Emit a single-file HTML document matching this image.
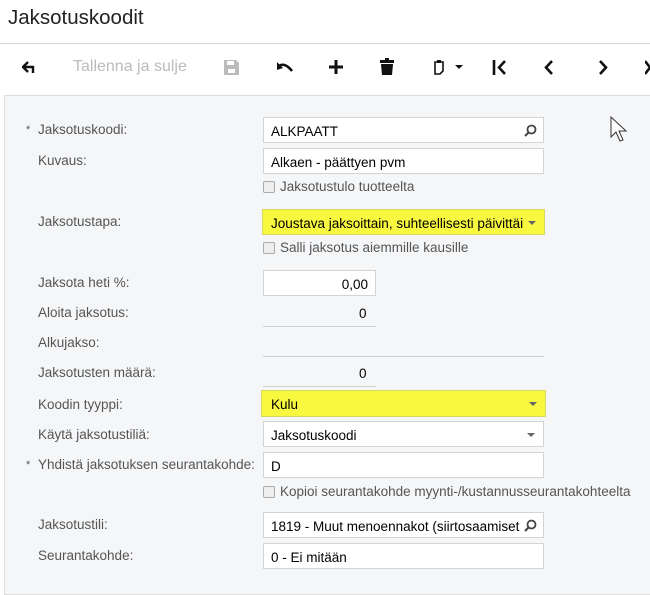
<!DOCTYPE html>
<html><head><meta charset="utf-8"><style>
*{box-sizing:border-box;margin:0;padding:0}
body{width:650px;height:581px;overflow:hidden;background:#fff;font-family:"Liberation Sans",sans-serif;position:relative}
.t{position:absolute;left:8px;top:6px;font-size:20.5px;color:#222}
.hl{position:absolute;left:0;top:43px;width:650px;height:1px;background:#d5d5d5}
.tb{position:absolute;top:58px;font-size:16px}
.panel{position:absolute;left:4px;top:95px;width:660px;height:500px;background:#f5f6f8;border:1px solid #dcdcdc}
.l{position:absolute;left:38px;font-size:13.5px;color:#555}
.s{position:absolute;left:26px;font-size:11px;color:#555}
.i{position:absolute;left:263px;width:281px;height:26px;background:#fff;border:1px solid #d4d4d4;font-size:13.5px;color:#000;padding:6px 7px;white-space:nowrap;overflow:hidden}
.y{background:#f8f840;border:1px solid #d8d860}
.c{position:absolute;left:263px;font-size:13.5px;color:#555}
.c span{display:inline-block;width:12px;height:12px;border:1px solid #aaa;border-radius:2px;background:#eee;vertical-align:-2px;margin-right:5px}
.u{position:absolute;left:263px;height:1px;background:#d0d0d0}
.v{position:absolute;font-size:13.5px;color:#000}
.ar{position:absolute;right:8px;top:11px;width:0;height:0;border-left:4px solid transparent;border-right:4px solid transparent;border-top:4px solid #666}
.mg{position:absolute;right:6px;top:6px}
</style></head><body>
<div class="t">Jaksotuskoodit</div>
<div class="hl"></div>
<svg style="position:absolute;left:22px;top:61px" width="16" height="12"><path d="M6 1L1 6L6 11M1 6H11V12" stroke="#111" stroke-width="2.4" fill="none"/></svg>
<div class="tb" style="left:73px;color:#bbb">Tallenna ja sulje</div>
<svg style="position:absolute;left:224px;top:60px" width="15" height="15"><path d="M0 0H12L15 3V15H0Z" fill="#bbb"/><rect x="3" y="1" width="7" height="4" fill="#fff"/><rect x="4" y="9" width="7" height="4" fill="#fff"/></svg>
<svg style="position:absolute;left:276px;top:61px" width="18" height="12"><path d="M1 1L1 9L7 7Z" fill="#111"/><path d="M2 6Q8 0 16 10" stroke="#111" stroke-width="2.6" fill="none"/></svg>
<svg style="position:absolute;left:328px;top:59px" width="16" height="16"><path d="M8 1V15M1 8H15" stroke="#111" stroke-width="3"/></svg>
<svg style="position:absolute;left:380px;top:58px" width="14" height="17"><rect x="0" y="2" width="14" height="3" fill="#111"/><rect x="5" y="0" width="4" height="2" fill="#111"/><path d="M1 6H13L12 17H2Z" fill="#111"/></svg>
<svg style="position:absolute;left:433px;top:59px" width="34" height="17"><path d="M2 3H10V12L7 15H2Z" stroke="#111" stroke-width="1.6" fill="none"/><rect x="4" y="1" width="4" height="3" fill="#111"/><path d="M22 6H30L26 10Z" fill="#111"/></svg>
<svg style="position:absolute;left:492px;top:60px" width="16" height="15"><path d="M2 0V15" stroke="#111" stroke-width="2.6"/><path d="M13 1L7 7.5L13 14" stroke="#111" stroke-width="2.6" fill="none"/></svg>
<svg style="position:absolute;left:543px;top:60px" width="12" height="15"><path d="M9 1L3 7.5L9 14" stroke="#111" stroke-width="2.6" fill="none"/></svg>
<svg style="position:absolute;left:597px;top:60px" width="12" height="15"><path d="M3 1L9 7.5L3 14" stroke="#111" stroke-width="2.6" fill="none"/></svg>
<svg style="position:absolute;left:645px;top:60px" width="5" height="15"><path d="M0 1L5 7.5L0 14" stroke="#111" stroke-width="2.6" fill="none"/></svg>
<div class="panel"></div>
<svg style="position:absolute;left:610px;top:116px" width="18" height="28"><path d="M1 1V21L6 16L10 25L13 24L9 15H16Z" fill="#fff" stroke="#333" stroke-width="1"/></svg>

<div class="s" style="top:124px">*</div><div class="l" style="top:122px">Jaksotuskoodi:</div>
<div class="i" style="top:117px">ALKPAATT<svg class="mg" width="13" height="13"><circle cx="7.5" cy="5.5" r="4" stroke="#444" stroke-width="1.8" fill="none"/><path d="M4.5 8.5L1 12" stroke="#444" stroke-width="2"/></svg></div>
<div class="l" style="top:153px">Kuvaus:</div>
<div class="i" style="top:148px">Alkaen - päättyen pvm</div>
<div class="c" style="top:179px"><span></span>Jaksotustulo tuotteelta</div>
<div class="l" style="top:214px">Jaksotustapa:</div>
<div class="i y" style="top:209px;left:262px;width:283px;padding-left:8px">Joustava jaksoittain, suhteellisesti päivittäi<div class="ar"></div></div>
<div class="c" style="top:240px"><span></span>Salli jaksotus aiemmille kausille</div>

<div class="l" style="top:275px">Jaksota heti %:</div>
<div class="i" style="top:270px;width:113px;text-align:right">0,00</div>
<div class="l" style="top:305px">Aloita jaksotus:</div>
<div class="v" style="top:306px;left:359px">0</div><div class="u" style="top:326px;width:113px"></div>
<div class="l" style="top:335px">Alkujakso:</div>
<div class="u" style="top:356px;width:281px"></div>
<div class="l" style="top:365px">Jaksotusten määrä:</div>
<div class="v" style="top:366px;left:359px">0</div><div class="u" style="top:386px;width:113px"></div>
<div class="l" style="top:397px">Koodin tyyppi:</div>
<div class="i y" style="top:390px;left:261px;width:285px;height:27px;padding-left:9px">Kulu<div class="ar"></div></div>
<div class="l" style="top:427px">Käytä jaksotustiliä:</div>
<div class="i" style="top:421px">Jaksotuskoodi<div class="ar"></div></div>
<div class="s" style="top:459px">*</div><div class="l" style="top:457px">Yhdistä jaksotuksen seurantakohde:</div>
<div class="i" style="top:452px">D</div>
<div class="c" style="top:484px"><span></span>Kopioi seurantakohde myynti-/kustannusseurantakohteelta</div>
<div class="l" style="top:517px">Jaksotustili:</div>
<div class="i" style="top:512px;padding-right:22px">1819 - Muut menoennakot (siirtosaamiset<svg class="mg" width="13" height="13" style="background:#fff"><circle cx="7.5" cy="5.5" r="4" stroke="#444" stroke-width="1.8" fill="none"/><path d="M4.5 8.5L1 12" stroke="#444" stroke-width="2"/></svg></div>
<div class="l" style="top:548px">Seurantakohde:</div>
<div class="i" style="top:543px">0 - Ei mitään</div>
</body></html>
